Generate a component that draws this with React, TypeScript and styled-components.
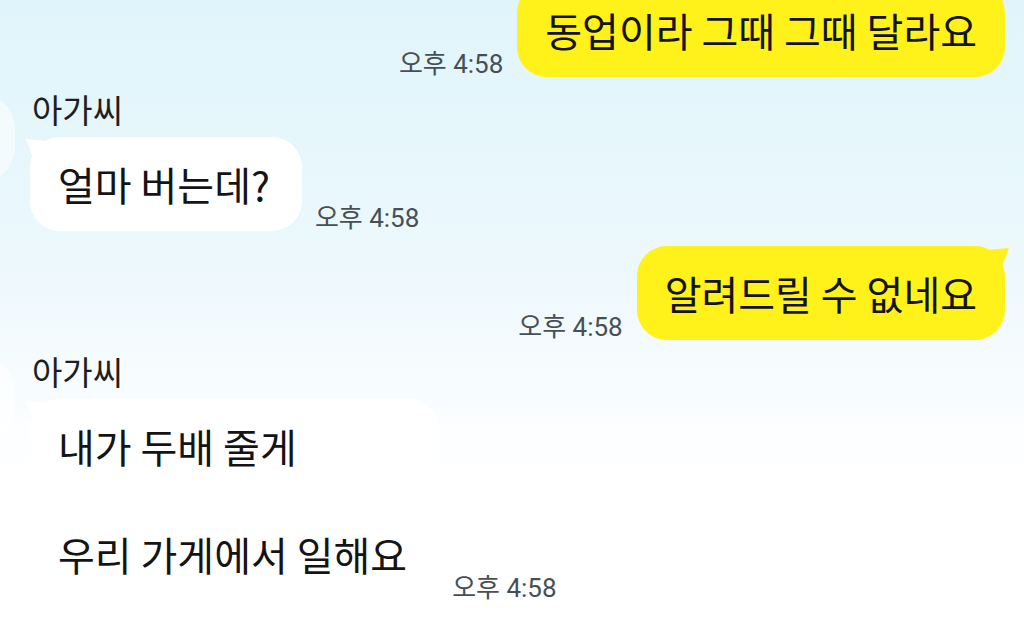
import styled, { createGlobalStyle } from 'styled-components';

const GlobalStyle = createGlobalStyle`
    html, body {
        margin: 0;
        padding: 0;
    }
    body {
        font-family: "Noto Sans CJK KR", "Noto Sans", sans-serif;
    }
`;

const Screen = styled.main`
    width: 1024px;
    height: 626px;
    overflow: hidden;
    background: linear-gradient(
        180deg,
        #e0f5fb 0px,
        #e7f7fc 170px,
        #eff9fd 290px,
        #f7fcfe 380px,
        #fdfeff 440px,
        #ffffff 490px
    );
`;

const ChatList = styled.div`
    display: flex;
    flex-direction: column;
    padding-right: 19px;
`;

const MyRow = styled.div<{ $top: number }>`
    display: flex;
    justify-content: flex-end;
    align-items: flex-end;
    gap: 14px;
    margin-top: ${(p) => p.$top}px;
`;

const TheirBlock = styled.div<{ $top: number }>`
    display: flex;
    align-items: flex-start;
    gap: 15px;
    margin-top: ${(p) => p.$top}px;
`;

const Avatar = styled.div`
    flex: none;
    width: 90px;
    height: 90px;
    margin-left: -75px;
    margin-top: 4px;
    border-radius: 36px;
    background: rgba(255, 255, 255, 0.55);
`;

const TheirColumn = styled.div`
    display: flex;
    flex-direction: column;
    gap: 8px;
`;

const Name = styled.div`
    font-size: 33px;
    line-height: 40px;
    color: #1e1e1e;
    padding-left: 2px;
`;

const TheirRow = styled.div`
    display: flex;
    align-items: flex-end;
    gap: 13px;
`;

const Bubble = styled.div<{ $mine?: boolean; $tail?: boolean }>`
    position: relative;
    padding: ${(p) => (p.$mine ? '20px 28px' : '20px 32px 20px 28px')};
    border-radius: 30px;
    font-size: 40px;
    line-height: 54px;
    color: #141414;
    white-space: pre-line;
    background: ${(p) => (p.$mine ? '#fff11a' : '#ffffff')};

    &::before {
        content: '';
        display: ${(p) => (p.$tail ? 'block' : 'none')};
        position: absolute;
        top: 2px;
        width: 22px;
        height: 26px;
        background: inherit;
        ${(p) =>
            p.$mine
                ? 'right: -4px; clip-path: polygon(100% 0, 0 8%, 55% 100%);'
                : 'left: -4px; clip-path: polygon(0 0, 100% 8%, 45% 100%);'}
    }
`;

const Time = styled.span`
    flex: none;
    font-family: "Roboto", "Noto Sans CJK KR", sans-serif;
    font-size: 26px;
    line-height: 1;
    color: #474f55;
    white-space: nowrap;
`;

type Msg = { text: string; time: string; tail?: boolean };

function Mine({ text, time, tail, top }: Msg & { top: number }) {
    return (
        <MyRow $top={top}>
            <Time>{time}</Time>
            <Bubble $mine $tail={tail}>{text}</Bubble>
        </MyRow>
    );
}

function Theirs({ name, text, time, top }: Msg & { name: string; top: number }) {
    return (
        <TheirBlock $top={top}>
            <Avatar />
            <TheirColumn>
                <Name>{name}</Name>
                <TheirRow>
                    <Bubble $tail>{text}</Bubble>
                    <Time>{time}</Time>
                </TheirRow>
            </TheirColumn>
        </TheirBlock>
    );
}

export default function App() {
    return (
        <>
            <GlobalStyle />
            <Screen>
                <ChatList>
                    <Mine top={-17} text="동업이라 그때 그때 달라요" time="오후 4:58" />
                    <Theirs top={12} name="아가씨" text="얼마 버는데?" time="오후 4:58" />
                    <Mine top={15} tail text="알려드릴 수 없네요" time="오후 4:58" />
                    <Theirs
                        top={11}
                        name="아가씨"
                        text={'내가 두배 줄게\n\n우리 가게에서 일해요'}
                        time="오후 4:58"
                    />
                </ChatList>
            </Screen>
        </>
    );
}
